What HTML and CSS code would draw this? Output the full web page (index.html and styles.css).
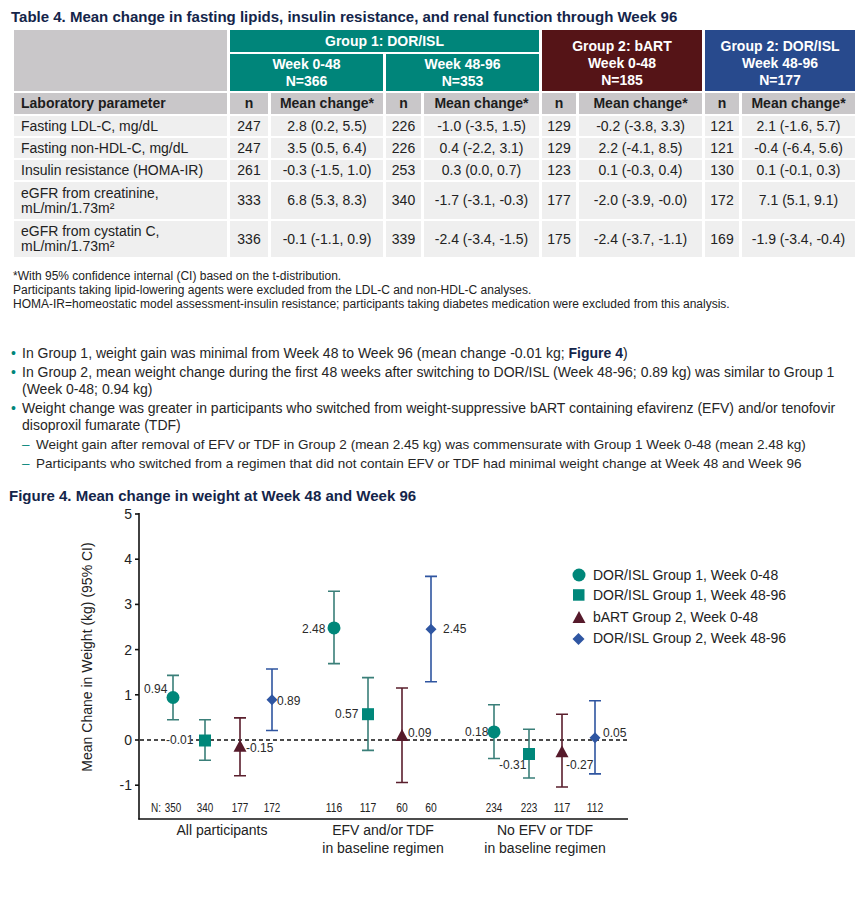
FILE: index.html
```html
<!DOCTYPE html>
<html lang="en">
<head>
  <meta charset="UTF-8" />
  <title>Lipids, insulin resistance, renal function and weight</title>
  <link rel="stylesheet" href="styles.css">
</head>
<body>
  <div class="page">

    <!-- Table 4 -->
    <h2 class="caption">Table 4. Mean change in fasting lipids, insulin resistance, and renal function through Week 96</h2>
    <table class="lab">
      <colgroup>
        <col class="c-param">
        <col class="c-n1"><col class="c-m1">
        <col class="c-n2"><col class="c-m2">
        <col class="c-n3"><col class="c-m3">
        <col class="c-n4"><col class="c-m4">
      </colgroup>
      <thead>
        <tr class="r-group">
          <th rowspan="2" class="blank"></th>
          <th colspan="4" class="teal">Group 1: DOR/ISL</th>
          <th colspan="2" rowspan="2" class="maroon tall">Group 2: bART<br>Week 0-48<br>N=185</th>
          <th colspan="2" rowspan="2" class="blue tall">Group 2: DOR/ISL<br>Week 48-96<br>N=177</th>
        </tr>
        <tr class="r-week">
          <th colspan="2" class="teal">Week 0-48<br>N=366</th>
          <th colspan="2" class="teal">Week 48-96<br>N=353</th>
        </tr>
        <tr class="r-cols">
          <th class="param">Laboratory parameter</th>
          <th>n</th><th>Mean change*</th>
          <th>n</th><th>Mean change*</th>
          <th>n</th><th>Mean change*</th>
          <th>n</th><th>Mean change*</th>
        </tr>
      </thead>
      <tbody>
        <tr class="r-one">
          <td class="param">Fasting LDL-C, mg/dL</td>
          <td>247</td><td>2.8 (0.2, 5.5)</td>
          <td>226</td><td>-1.0 (-3.5, 1.5)</td>
          <td>129</td><td>-0.2 (-3.8, 3.3)</td>
          <td>121</td><td>2.1 (-1.6, 5.7)</td>
        </tr>
        <tr class="r-one">
          <td class="param">Fasting non-HDL-C, mg/dL</td>
          <td>247</td><td>3.5 (0.5, 6.4)</td>
          <td>226</td><td>0.4 (-2.2, 3.1)</td>
          <td>129</td><td>2.2 (-4.1, 8.5)</td>
          <td>121</td><td>-0.4 (-6.4, 5.6)</td>
        </tr>
        <tr class="r-one">
          <td class="param">Insulin resistance (HOMA-IR)</td>
          <td>261</td><td>-0.3 (-1.5, 1.0)</td>
          <td>253</td><td>0.3 (0.0, 0.7)</td>
          <td>123</td><td>0.1 (-0.3, 0.4)</td>
          <td>130</td><td>0.1 (-0.1, 0.3)</td>
        </tr>
        <tr class="r-two">
          <td class="param">eGFR from creatinine,<br>mL/min/1.73m²</td>
          <td>333</td><td>6.8 (5.3, 8.3)</td>
          <td>340</td><td>-1.7 (-3.1, -0.3)</td>
          <td>177</td><td>-2.0 (-3.9, -0.0)</td>
          <td>172</td><td>7.1 (5.1, 9.1)</td>
        </tr>
        <tr class="r-two r-last">
          <td class="param">eGFR from cystatin C,<br>mL/min/1.73m²</td>
          <td>336</td><td>-0.1 (-1.1, 0.9)</td>
          <td>339</td><td>-2.4 (-3.4, -1.5)</td>
          <td>175</td><td>-2.4 (-3.7, -1.1)</td>
          <td>169</td><td>-1.9 (-3.4, -0.4)</td>
        </tr>
      </tbody>
    </table>

    <div class="notes">
      <p>*With 95% confidence internal (CI) based on the t-distribution.</p>
      <p>Participants taking lipid-lowering agents were excluded from the LDL-C and non-HDL-C analyses.</p>
      <p>HOMA-IR=homeostatic model assessment-insulin resistance; participants taking diabetes medication were excluded from this analysis.</p>
    </div>

    <!-- Weight bullets -->
    <ul class="points">
      <li>In Group 1, weight gain was minimal from Week 48 to Week 96 (mean change -0.01 kg; <b>Figure 4</b>)</li>
      <li>In Group 2, mean weight change during the first 48 weeks after switching to DOR/ISL (Week 48-96; 0.89 kg) was similar to Group 1 (Week 0-48; 0.94 kg)</li>
      <li>Weight change was greater in participants who switched from weight-suppressive bART containing efavirenz (EFV) and/or tenofovir disoproxil fumarate (TDF)</li>
      <li class="sub">Weight gain after removal of EFV or TDF in Group 2 (mean 2.45 kg) was commensurate with Group 1 Week 0-48 (mean 2.48 kg)</li>
      <li class="sub">Participants who switched from a regimen that did not contain EFV or TDF had minimal weight change at Week 48 and Week 96</li>
    </ul>

    <!-- Figure 4 -->
    <h2 class="caption fig-caption">Figure 4. Mean change in weight at Week 48 and Week 96</h2>
    <svg class="chart" width="868" height="360" viewBox="0 503 868 360">
      <!-- axes -->
      <g class="axis">
        <line x1="139" y1="512" x2="139" y2="818.5" />
        <line x1="138.3" y1="818" x2="628" y2="818" />
        <line x1="135" y1="513" x2="139" y2="513" />
        <line x1="135" y1="558.2" x2="139" y2="558.2" />
        <line x1="135" y1="603.4" x2="139" y2="603.4" />
        <line x1="135" y1="648.6" x2="139" y2="648.6" />
        <line x1="135" y1="693.8" x2="139" y2="693.8" />
        <line x1="135" y1="739" x2="139" y2="739" />
        <line x1="135" y1="784.2" x2="139" y2="784.2" />
      </g>
      <g class="ticks">
        <text x="132" y="518">5</text>
        <text x="132" y="563">4</text>
        <text x="132" y="608">3</text>
        <text x="132" y="654">2</text>
        <text x="132" y="699">1</text>
        <text x="132" y="744">0</text>
        <text x="132" y="789">-1</text>
      </g>
      <text class="ytitle" transform="translate(91.5,656) rotate(-90)">Mean Chane in Weight (kg) (95% CI)</text>
      <line class="zero" x1="140" y1="739" x2="628" y2="739" />

      <!-- error bars -->
      <g class="bar teal-bar">
        <path d="M173 674.4V718.7M167 674.4H179M167 718.7H179" />
        <path d="M205 718.7V759.3M199 718.7H211M199 759.3H211" />
        <path d="M334 590.3V662.6M328 590.3H340M328 662.6H340" />
        <path d="M368 676.6V749.4M362 676.6H374M362 749.4H374" />
        <path d="M494 703.7V757.5M488 703.7H500M488 757.5H500" />
        <path d="M529 728.2V777M523 728.2H535M523 777H535" />
      </g>
      <g class="bar maroon-bar">
        <path d="M240 716.9V774.7M234 716.9H246M234 774.7H246" />
        <path d="M402 687V781.5M396 687H408M396 781.5H408" />
        <path d="M562 713.2V786M556 713.2H568M556 786H568" />
      </g>
      <g class="bar blue-bar">
        <path d="M272 668V729.5M266 668H278M266 729.5H278" />
        <path d="M431 575.4V680.7M425 575.4H437M425 680.7H437" />
        <path d="M595 699.7V772.9M589 699.7H601M589 772.9H601" />
      </g>

      <!-- markers -->
      <g class="mk-teal">
        <circle cx="173" cy="696.5" r="6.5" />
        <circle cx="334" cy="626.9" r="6.5" />
        <circle cx="494" cy="730.9" r="6.5" />
        <rect x="199" y="733.5" width="12" height="12" />
        <rect x="362" y="707.2" width="12" height="12" />
        <rect x="523" y="747" width="12" height="12" />
      </g>
      <g class="mk-maroon">
        <path d="M240 738.8L246.5 750.8H233.5Z" />
        <path d="M402 727.9L408.5 739.9H395.5Z" />
        <path d="M562 744.2L568.5 756.2H555.5Z" />
      </g>
      <g class="mk-blue">
        <path d="M272 693.3L277.5 698.8L272 704.3L266.5 698.8Z" />
        <path d="M431 622.8L436.5 628.3L431 633.8L425.5 628.3Z" />
        <path d="M595 731.2L600.5 736.7L595 742.2L589.5 736.7Z" />
      </g>

      <!-- value labels -->
      <rect class="label-bg" x="165" y="733" width="26" height="12" />
      <g class="values">
        <text x="144" y="692">0.94</text>
        <text x="166" y="743">-0.01</text>
        <text x="246" y="751">-0.15</text>
        <text x="277" y="704">0.89</text>
        <text x="302" y="632">2.48</text>
        <text x="335" y="717">0.57</text>
        <text x="408" y="736">0.09</text>
        <text x="443" y="632">2.45</text>
        <text x="465" y="735">0.18</text>
        <text x="499" y="768">-0.31</text>
        <text x="566" y="768">-0.27</text>
        <text x="603" y="736">0.05</text>
      </g>

      <!-- N counts -->
      <g class="counts">
        <text x="151" y="811" textLength="10" lengthAdjust="spacingAndGlyphs">N:</text>
        <text class="mid" x="173" y="811" textLength="16.5" lengthAdjust="spacingAndGlyphs">350</text>
        <text class="mid" x="205" y="811" textLength="16.5" lengthAdjust="spacingAndGlyphs">340</text>
        <text class="mid" x="240" y="811" textLength="16.5" lengthAdjust="spacingAndGlyphs">177</text>
        <text class="mid" x="272" y="811" textLength="16.5" lengthAdjust="spacingAndGlyphs">172</text>
        <text class="mid" x="334" y="811" textLength="16.5" lengthAdjust="spacingAndGlyphs">116</text>
        <text class="mid" x="368" y="811" textLength="16.5" lengthAdjust="spacingAndGlyphs">117</text>
        <text class="mid" x="402" y="811" textLength="11.5" lengthAdjust="spacingAndGlyphs">60</text>
        <text class="mid" x="431" y="811" textLength="11.5" lengthAdjust="spacingAndGlyphs">60</text>
        <text class="mid" x="494" y="811" textLength="16.5" lengthAdjust="spacingAndGlyphs">234</text>
        <text class="mid" x="529" y="811" textLength="16.5" lengthAdjust="spacingAndGlyphs">223</text>
        <text class="mid" x="562" y="811" textLength="16.5" lengthAdjust="spacingAndGlyphs">117</text>
        <text class="mid" x="595" y="811" textLength="16.5" lengthAdjust="spacingAndGlyphs">112</text>
      </g>

      <!-- group labels -->
      <g class="groups">
        <text x="222" y="834">All participants</text>
        <text x="383" y="834">EFV and/or TDF</text>
        <text x="383" y="852">in baseline regimen</text>
        <text x="545" y="834">No EFV or TDF</text>
        <text x="545" y="852">in baseline regimen</text>
      </g>

      <!-- legend -->
      <g class="legend">
        <circle class="fill-teal" cx="579" cy="574" r="6.5" />
        <rect class="fill-teal" x="573" y="588.2" width="11.5" height="11.5" />
        <path class="fill-maroon" d="M579 610L585.5 622H572.5Z" />
        <path class="fill-blue" d="M578.5 632L584.5 638L578.5 644L572.5 638Z" />
        <text x="593" y="579">DOR/ISL Group 1, Week 0-48</text>
        <text x="593" y="599">DOR/ISL Group 1, Week 48-96</text>
        <text x="593" y="621">bART Group 2, Week 0-48</text>
        <text x="593" y="642">DOR/ISL Group 2, Week 48-96</text>
      </g>
    </svg>

  </div>
</body>
</html>
```

FILE: styles.css
```css
/* --- Reset & Layout --- */
* {
  box-sizing: border-box;
  margin: 0;
  padding: 0;
}

body {
  font-family: "Liberation Sans", Arial, sans-serif;
  background: #fff;
  color: #222;
}

.page {
  width: 868px;
  padding: 8px 0 0 11px;
}

/* --- Captions --- */
.caption {
  font-size: 15px;
  line-height: 18px;
  font-weight: bold;
  color: #14254a;
}

.fig-caption {
  margin-top: 15px;
  margin-left: -2px;
  line-height: 17px;
}

/* --- Table --- */
.lab {
  table-layout: fixed;
  width: 846px;
  margin-top: 2px;
  border-collapse: separate;
  border-spacing: 3px 2px;
  font-size: 14px;
}

.c-param { width: 213px; }
.c-n1 { width: 38px; }
.c-m1 { width: 112px; }
.c-n2 { width: 35px; }
.c-m2 { width: 115px; }
.c-n3 { width: 34px; }
.c-m3 { width: 123px; }
.c-n4 { width: 34px; }
.c-m4 { width: 113px; }

.lab th,
.lab td {
  padding: 0 2px;
  text-align: center;
  vertical-align: middle;
  line-height: 17px;
  white-space: nowrap;
}

.lab th {
  font-weight: bold;
  background: #c9c7c9;
  color: #1d1d1d;
}

.lab td {
  background: #efefef;
  color: #222;
}

.lab .param {
  text-align: left;
  padding-left: 7px;
}

.lab td.param {
  line-height: 15px;
}

.lab th.teal { background: #00857a; color: #fff; }
.lab th.maroon { background: #551417; color: #fff; }
.lab th.blue { background: #284a8d; color: #fff; }

.lab th.tall {
  padding-top: 6px;
}

.r-group { height: 22px; }
.r-week { height: 37px; }
.r-cols { height: 21px; }
.r-one { height: 20px; }
.r-two { height: 37px; }
.r-last { height: 36px; }

/* --- Footnotes --- */
.notes {
  margin-top: 10px;
  padding-left: 2px;
  font-size: 12px;
  line-height: 14px;
  color: #222;
}

/* --- Bullets --- */
.points {
  list-style: none;
  margin-top: 34px;
  font-size: 14px;
  line-height: 17px;
  color: #262626;
}

.points li {
  padding-left: 11px;
  text-indent: -11px;
  margin-bottom: 2px;
}

.points li::before {
  content: "•";
  display: inline-block;
  width: 11px;
  text-indent: 0;
  color: #00857a;
}

.points li.sub {
  padding-left: 25px;
  text-indent: -14px;
  font-size: 13.5px;
}

.points li.sub::before {
  content: "–";
  width: 14px;
}

.points b {
  color: #14254a;
}

/* --- Chart --- */
.chart {
  display: block;
  margin-left: -11px;
  font-family: "Liberation Sans", Arial, sans-serif;
}

.axis line {
  stroke: #111;
  stroke-width: 1.6;
}

.zero {
  stroke: #111;
  stroke-width: 1.3;
  stroke-dasharray: 4 3;
}

.ticks text {
  font-size: 14px;
  text-anchor: end;
  fill: #222;
}

.ytitle {
  font-size: 14px;
  text-anchor: middle;
  fill: #222;
}

.bar path {
  fill: none;
  stroke-width: 1.6;
}

.teal-bar path { stroke: #3a7f79; }
.maroon-bar path { stroke: #5a1f2d; }
.blue-bar path { stroke: #2f55a0; }

.mk-teal, .fill-teal { fill: #00877a; }
.mk-maroon, .fill-maroon { fill: #561a2b; }
.mk-blue, .fill-blue { fill: #2f56a2; }

.label-bg { fill: #fff; }

.values text {
  font-size: 12px;
  fill: #2a2a2a;
}

.counts text {
  font-size: 12.5px;
  fill: #222;
}

.counts .mid {
  text-anchor: middle;
}

.groups text {
  font-size: 14px;
  text-anchor: middle;
  fill: #222;
}

.legend text {
  font-size: 14px;
  fill: #222;
}
```
